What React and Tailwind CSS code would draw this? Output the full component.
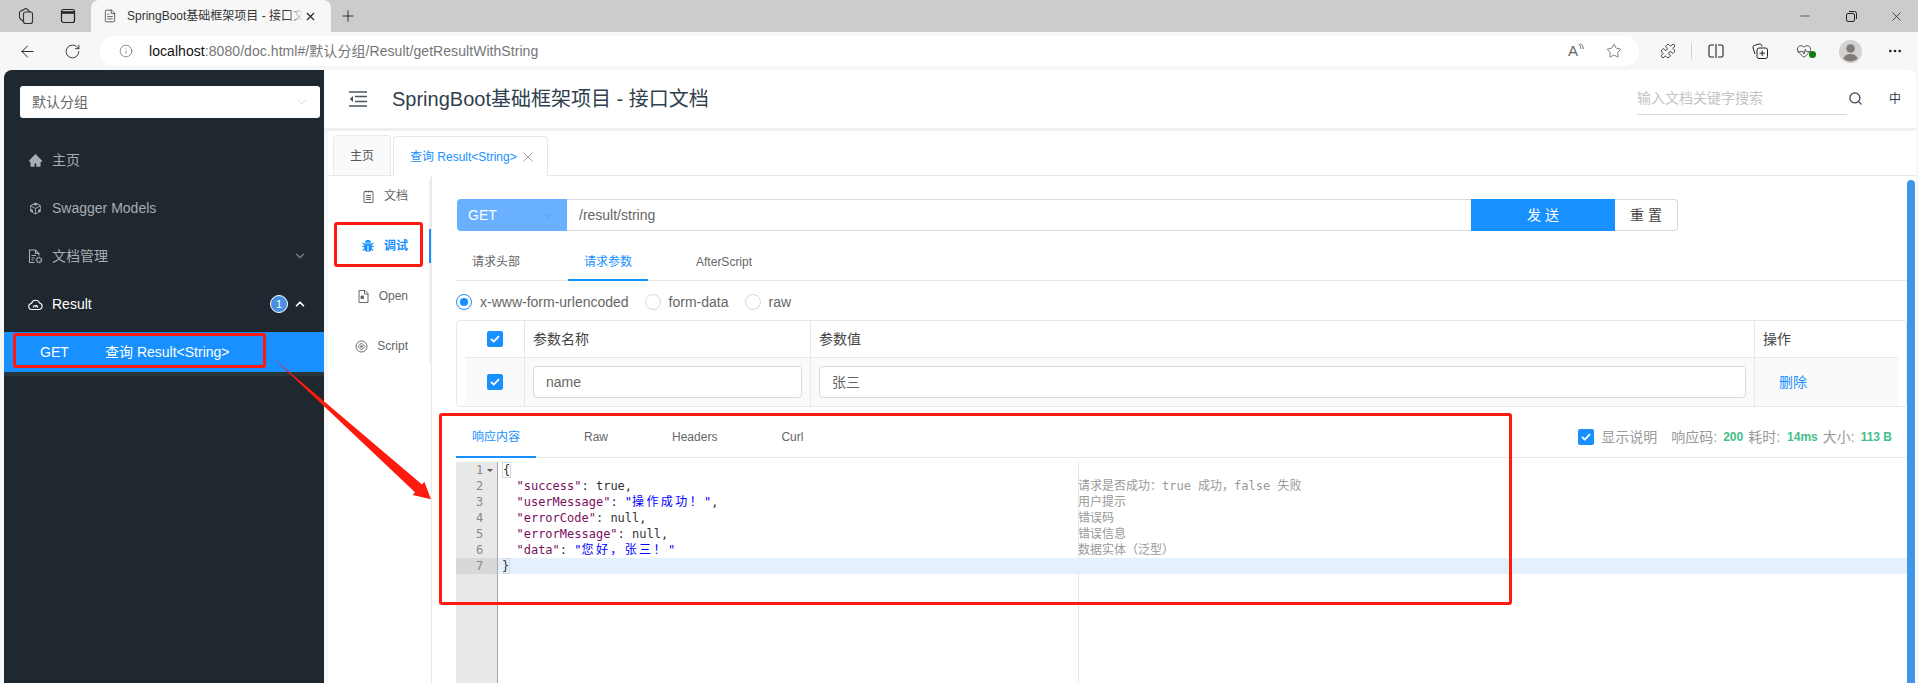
import React from 'react'
import { ArrowLeft, RotateCw, Info, Star, Puzzle, Plus, X, Minus, Search, MoreHorizontal, ChevronDown, ChevronUp, HeartPulse, FileText } from 'lucide-react'
import { AiFillHome, AiOutlineCodeSandbox, AiFillBug } from 'react-icons/ai'

const fontSans = 'font-["Liberation_Sans","Noto_Sans_CJK_SC",sans-serif]'

// Browser chrome -----------------------------------------------------------
function WorkspacesIcon() {
  return (
    <svg width="18" height="18" viewBox="0 0 18 18" fill="none" stroke="#333" strokeWidth="1.1">
      <rect x="6.5" y="5" width="9" height="11.5" rx="2" />
      <path d="M6.5 14.5 L3 11.5 a1.5 1.5 0 0 1 -0.5-1.2 V5.5 a2 2 0 0 1 1.2-1.6 L6 3" />
      <path d="M5.5 3.5 L8 1.8 a1.5 1.5 0 0 1 1.6 0 L13 5" />
    </svg>
  )
}

function VerticalTabsIcon() {
  return (
    <svg width="16" height="16" viewBox="0 0 16 16" fill="none" stroke="#222" strokeWidth="1.2">
      <rect x="1.5" y="1.5" width="13" height="13" rx="2" />
      <path d="M1.5 4.5 H14.5" strokeWidth="2.6" />
    </svg>
  )
}

function BrowserTabs() {
  return (
    <div className="flex h-8 shrink-0 bg-[#cccccc]">
      <div className="flex w-[52px] items-center justify-center"><WorkspacesIcon /></div>
      <div className="flex w-8 items-center justify-center"><VerticalTabsIcon /></div>
      <div className="ml-[7px] flex h-8 w-[240px] items-center rounded-t-lg bg-[#f7f7f7] pl-[12px]">
        <FileText size={14} strokeWidth={1.2} className="shrink-0 text-[#222]" />
        <div className="relative ml-[10px] w-[176px] overflow-hidden whitespace-nowrap text-[12px] text-[#333]">
          SpringBoot基础框架项目 - 接口文档
          <div className="absolute inset-y-0 right-0 w-4 bg-gradient-to-r from-transparent to-[#f7f7f7]" />
        </div>
        <X size={13} className="ml-[1px] shrink-0 text-[#222]" />
      </div>
      <div className="flex w-[34px] items-center justify-center"><Plus size={18} strokeWidth={1.2} className="text-[#222]" /></div>
      <div className="flex-1" />
      <div className="flex w-[46px] items-center justify-center"><Minus size={14} strokeWidth={1.2} className="text-[#222]" /></div>
      <div className="flex w-[46px] items-center justify-center">
        <svg width="11" height="11" viewBox="0 0 11 11" fill="none" stroke="#222" strokeWidth="1">
          <rect x="0.5" y="2.5" width="8" height="8" rx="1.5" />
          <path d="M3 0.5 H8.5 a2 2 0 0 1 2 2 V8" />
        </svg>
      </div>
      <div className="flex w-[44px] items-center justify-center"><X size={15} strokeWidth={1.2} className="text-[#222]" /></div>
    </div>
  )
}

function BrowserToolbar() {
  return (
    <div className="flex h-[38px] shrink-0 items-center bg-[#f7f7f7]">
      <div className="flex w-[54px] justify-center"><ArrowLeft size={19} strokeWidth={1.2} className="text-[#222]" /></div>
      <div className="flex w-9 justify-center"><RotateCw size={17} strokeWidth={1.2} className="text-[#222]" /></div>
      <div className="ml-[10px] flex h-[30px] w-[1539px] items-center justify-between rounded-full bg-white pl-[19px] pr-[17px]">
        <div className="flex items-center gap-[16px]">
          <Info size={14} strokeWidth={1.1} className="text-[#555]" />
          <div className="text-[14px] tracking-[0.06px] text-[#767676]"><span className="text-[#111]">localhost</span>:8080/doc.html#/默认分组/Result/getResultWithString</div>
        </div>
        <div className="flex items-center gap-[22px]">
          <div className="flex items-start text-[#666]">
            <span className="text-[15px] leading-[16px]">A</span>
            <svg width="6" height="8" viewBox="0 0 6 8" fill="none" stroke="#666" strokeWidth="0.9"><path d="M0.5 1 Q3 2.5 3 6" /><path d="M2 0.5 Q5.5 2 5.5 6" /></svg>
          </div>
          <Star size={16} strokeWidth={1} className="text-[#444]" />
        </div>
      </div>
      <div className="ml-[5px] flex w-[47px] justify-center"><Puzzle size={16} strokeWidth={1.2} className="text-[#222]" /></div>
      <div className="h-4 w-px bg-[#d0d0d0]" />
      <div className="flex w-[47px] justify-center">
        <svg width="16" height="14" viewBox="0 0 16 14" fill="none" stroke="#222" strokeWidth="1.1">
          <path d="M6 1 H2.5 a1.5 1.5 0 0 0-1.5 1.5 v9 a1.5 1.5 0 0 0 1.5 1.5 H6" />
          <path d="M10 1 H13.5 a1.5 1.5 0 0 1 1.5 1.5 v9 a1.5 1.5 0 0 1-1.5 1.5 H10" />
          <path d="M8 0 V14" />
        </svg>
      </div>
      <div className="flex w-[42px] justify-center">
        <svg width="16" height="16" viewBox="0 0 16 16" fill="none" stroke="#222" strokeWidth="1">
          <rect x="5" y="5" width="10.5" height="10.5" rx="2" />
          <path d="M10.2 7.5 V13 M7.5 10.2 H13" />
          <path d="M3 11 L1 5 a2 2 0 0 1 1.2-2.5 L7 1 a2 2 0 0 1 2.5 1.2 L10 3.5" />
        </svg>
      </div>
      <div className="relative flex w-[46px] justify-center">
        <HeartPulse size={16} strokeWidth={1.1} className="text-[#222]" />
        <div className="absolute left-[28px] top-[8px] h-[7px] w-[7px] rounded-full bg-[#107c10]" />
      </div>
      <div className="flex w-[46px] justify-center">
        <svg width="23" height="23" viewBox="0 0 23 23">
          <circle cx="11.5" cy="11.5" r="11.5" fill="#d4d2d0" />
          <circle cx="11.5" cy="8.5" r="4.3" fill="#7f7c79" />
          <path d="M4.5 19 a7 5 0 0 1 14 0 a11.5 11.5 0 0 1 -14 0" fill="#7f7c79" />
        </svg>
      </div>
      <div className="flex w-[44px] justify-center"><MoreHorizontal size={16} className="text-[#222]" /></div>
    </div>
  )
}

// Small ant-style icons that the packages don't have
function FileGearIcon() {
  return (
    <svg width="15" height="15" viewBox="0 0 15 15" fill="none" stroke="currentColor" strokeWidth="1.1">
      <path d="M6.5 13.5 H1.5 V1 H7.5 L11 4.5 V6.5" />
      <path d="M7.5 1 V4.5 H11" />
      <path d="M3.5 6.5 H8 M3.5 9 H6.5 M3.5 11 H5.5" />
      <circle cx="11" cy="11" r="2.5" strokeWidth="1.7" strokeDasharray="1.6 0.6" />
    </svg>
  )
}

function CloudGaugeIcon() {
  return (
    <svg width="15" height="15" viewBox="0 0 15 15" fill="none" stroke="currentColor" strokeWidth="1.1">
      <path d="M4 12.5 a3 3 0 0 1 -0.5-6 a4.2 4.2 0 0 1 8-0.5 a3.3 3.3 0 0 1 -0.2 6.5 Z" />
      <path d="M5 10.5 a2.6 2.6 0 0 1 5 0 M7.5 10.5 L8.8 8.3" />
    </svg>
  )
}

function NotepadIcon() {
  return (
    <svg width="13" height="13" viewBox="0 0 13 13" fill="none" stroke="currentColor" strokeWidth="1">
      <rect x="2" y="1.5" width="9" height="11" rx="0.5" />
      <path d="M4 0.5 V2.5 M6.5 0.5 V2.5 M9 0.5 V2.5 M4 5.5 H9 M4 7.5 H9 M4 9.5 H9" />
    </svg>
  )
}

function FileLinesIcon() {
  return (
    <svg width="13" height="13" viewBox="0 0 13 13" fill="none" stroke="currentColor" strokeWidth="1">
      <path d="M2 0.5 H8 L11 3.5 V12.5 H2 Z" />
      <path d="M7.5 0.5 V4 H11" />
      <path d="M4 6 H6.5 V8.5 H4 Z" fill="currentColor" />
    </svg>
  )
}

function ScriptIcon() {
  return (
    <svg width="13" height="13" viewBox="0 0 13 13" fill="none" stroke="currentColor" strokeWidth="1">
      <circle cx="6.5" cy="6.5" r="5.5" />
      <path d="M6.5 3 L10 6.5 L6.5 10 L3 6.5 Z" />
      <circle cx="6.5" cy="6.5" r="1.2" fill="currentColor" stroke="none" />
    </svg>
  )
}

// Left navigation ----------------------------------------------------------
function NavItem({ icon, label, active, right }) {
  return (
    <div className={`flex h-12 items-center pl-6 pr-[17px] text-[14px] ${active ? 'text-white' : 'text-[#a6adb4]'}`}>
      <span className={`flex w-6 ${active ? 'text-white' : 'text-[#a6adb4]'}`}>{icon}</span>
      <span className="flex-1">{label}</span>
      {right}
    </div>
  )
}

function Sidebar() {
  return (
    <div className="flex w-[320px] shrink-0 flex-col rounded-tl-lg bg-[#1f282e]">
      <div className="ml-4 mr-1 mt-4 flex h-8 items-center justify-between rounded-[3px] bg-white pl-3 pr-[11px] text-[14px] text-[#666]">
        默认分组
        <ChevronDown size={14} strokeWidth={1} className="text-[#bbb]" />
      </div>
      <div className="mt-[18px]">
        <NavItem icon={<AiFillHome size={15} />} label="主页" />
        <NavItem icon={<AiOutlineCodeSandbox size={15} />} label="Swagger Models" />
        <NavItem
          icon={<FileGearIcon />}
          label="文档管理"
          right={<ChevronDown size={14} strokeWidth={3} className="text-[#6a7378]" />}
        />
        <NavItem
          active
          icon={<CloudGaugeIcon />}
          label="Result"
          right={
            <div className="flex items-center gap-[5px]">
              <span className="flex h-[18px] w-[18px] items-center justify-center rounded-full border border-white bg-[#4a90e2] text-[11px] text-white">1</span>
              <ChevronUp size={14} strokeWidth={3} className="text-white" />
            </div>
          }
        />
      </div>
      <div className="mt-1 flex h-10 items-center bg-[#1890ff] text-[14px] text-white">
        <span className="w-[101px] pl-9">GET</span>
        <span>查询 Result&lt;String&gt;</span>
      </div>
      <div className="h-1 bg-[#29353b]" />
    </div>
  )
}

// Document tabs and left method menu --------------------------------------
function TopHeader() {
  return (
    <div className="flex h-[61px] shrink-0 items-center border-b-[3px] border-[#eef1f4] pb-[1px] pl-[25px] text-[#303f4d]">
      <svg width="18" height="16" viewBox="0 0 18 16" fill="none" stroke="#49555f" strokeWidth="1.6">
        <path d="M0 1 H18 M6 5.5 H18 M6 10.5 H18 M0 15 H18" />
        <path d="M4 5 L0.8 8 L4 11 Z" fill="#49555f" stroke="none" />
      </svg>
      <div className="ml-[25px] text-[20px]">SpringBoot基础框架项目 - 接口文档</div>
      <div className="flex-1" />
      <div className="flex h-[32px] w-[210px] items-center border-b border-[#d9d9d9] text-[14px] text-[#c4c4c4]">输入文档关键字搜索</div>
      <Search size={15} className="ml-[1px] text-[#303f4d]" />
      <div className="ml-[26px] mr-[15px] text-[12px] text-[#303f4d]">中</div>
    </div>
  )
}

function DocTabs() {
  return (
    <div className="mt-[5px] flex h-10 shrink-0 items-end border-b border-[#e8e8e8] pl-[5px]">
      <div className="flex h-10 w-[58px] items-center justify-center rounded-t border border-b-0 border-[#e8e8e8] bg-[#fafafa] text-[12px] text-[#555]">主页</div>
      <div className="-mb-px ml-[2px] flex h-10 w-[155px] items-center gap-[3px] rounded-t border border-b-0 border-[#e8e8e8] bg-white pl-[16px] text-[12px] text-[#1890ff]">
        查询 Result&lt;String&gt;
        <X size={16} strokeWidth={1} className="text-[#777]" />
      </div>
    </div>
  )
}

function MethodMenu() {
  const items = [
    { label: '文档', icon: <NotepadIcon /> },
    { label: '调试', icon: <AiFillBug size={14} />, active: true },
    { label: 'Open', icon: <FileLinesIcon /> },
    { label: 'Script', icon: <ScriptIcon /> },
  ]
  return (
    <div className="w-[104px] shrink-0 border-r border-[#e8e8e8] pt-[3px]">
      <div className="flex flex-col gap-4 border-r-2 border-[#f0f0f0]">
        {items.map((item) => (
          <div
            key={item.label}
            className={`-mr-0.5 flex h-[34px] items-center justify-end gap-[9px] border-r-2 pr-[21px] text-[12px] ${
              item.active ? 'border-[#1890ff] font-bold text-[#1890ff]' : 'border-transparent text-[#666]'
            }`}
          >
            {item.icon}
            {item.label}
          </div>
        ))}
      </div>
    </div>
  )
}

// Request form -------------------------------------------------------------
function Check() {
  return (
    <div className="flex h-4 w-4 shrink-0 items-center justify-center rounded-[2px] bg-[#1890ff]">
      <svg width="10" height="8" viewBox="0 0 10 8" fill="none" stroke="#fff" strokeWidth="1.8"><path d="M1 4 L3.8 6.6 L9 1.2" /></svg>
    </div>
  )
}

function Radio({ label, on }) {
  return (
    <div className="flex items-center gap-2 text-[14px] text-[#666]">
      <div className={`flex h-4 w-4 items-center justify-center rounded-full border ${on ? 'border-[#1890ff]' : 'border-[#d9d9d9]'}`}>
        {on && <div className="h-2 w-2 rounded-full bg-[#1890ff]" />}
      </div>
      {label}
    </div>
  )
}

function TabRow({ tabs, active, height }) {
  return (
    <div className={`flex items-center ${height}`}>
      {tabs.map((t) => (
        <div key={t} className={`mr-8 px-4 text-[12px] ${t === active ? 'text-[#1890ff]' : 'text-[#666]'}`}>{t}</div>
      ))}
    </div>
  )
}

function RequestForm() {
  return (
    <>
      <div className="mt-[23px] flex h-8 pl-[1px]">
        <div className="flex w-[110px] items-center justify-between rounded-l bg-[#69b1ff] pl-[11px] pr-[12px] text-[14px] text-white">
          GET
          <ChevronDown size={13} strokeWidth={1} className="text-[#3d8ee0]" />
        </div>
        <div className="flex w-[904px] items-center border-y border-[#d9d9d9] pl-3 text-[14px] text-[#666]">/result/string</div>
        <div className="w-[144px] bg-[#1890ff] text-center text-[14px] leading-8 text-white">发 送</div>
        <div className="w-[63px] rounded-r border border-l-0 border-[#d9d9d9] text-center text-[14px] leading-[30px] text-[#444]">重 置</div>
      </div>
      <div className="relative h-[50px] border-b border-[#e8e8e8] pt-[19px]">
        <TabRow tabs={['请求头部', '请求参数', 'AfterScript']} active="请求参数" height="h-6" />
        <div className="absolute bottom-[-1px] left-[112px] h-0.5 w-20 bg-[#1890ff]" />
      </div>
      <div className="flex h-[39px] items-center gap-4 pt-[3px]">
        <Radio on label="x-www-form-urlencoded" />
        <Radio label="form-data" />
        <Radio label="raw" />
      </div>
      <div className="grid grid-cols-[59px_286px_944px_144px] grid-rows-[37px_48px] rounded border border-[#e8e8e8] px-2 text-[14px] text-[#444]">
        <div className="flex items-center justify-center border-b border-[#e8e8e8]"><Check /></div>
        <div className="flex items-center border-b border-l border-[#e8e8e8] pl-2">参数名称</div>
        <div className="flex items-center border-b border-l border-[#e8e8e8] pl-2">参数值</div>
        <div className="flex items-center border-b border-l border-[#e8e8e8] pl-2">操作</div>
        <div className="flex items-center justify-center bg-[#fafafa]"><Check /></div>
        <div className="flex items-center border-l border-[#e8e8e8] bg-[#fafafa] px-2">
          <div className="flex h-8 w-full items-center rounded border border-[#d9d9d9] bg-white pl-3 text-[#666]">name</div>
        </div>
        <div className="flex items-center border-l border-[#e8e8e8] bg-[#fafafa] px-2">
          <div className="flex h-8 w-full items-center rounded border border-[#d9d9d9] bg-white pl-3 text-[#666]">张三</div>
        </div>
        <div className="flex items-center border-l border-[#e8e8e8] bg-[#fafafa] pl-6 text-[#1890ff]">删除</div>
      </div>
    </>
  )
}

// Response panel -----------------------------------------------------------
const Key = ({ children }) => <span className="text-[#7a0f5c]">{children}</span>
const Str = ({ children }) => <span className="text-[#0000ff]">{children}</span>
const Cjk = ({ children }) => <span className="tracking-[2.4px]">{children}</span>

const codeLines = [
  { code: <span className="border border-[#d8d8d8]">{'{'}</span> },
  { code: <>{'  '}<Key>"success"</Key>: true,</>, note: '请求是否成功：true 成功，false 失败' },
  { code: <>{'  '}<Key>"userMessage"</Key>: <Str>"<Cjk>操作成功！</Cjk>"</Str>,</>, note: '用户提示' },
  { code: <>{'  '}<Key>"errorCode"</Key>: null,</>, note: '错误码' },
  { code: <>{'  '}<Key>"errorMessage"</Key>: null,</>, note: '错误信息' },
  { code: <>{'  '}<Key>"data"</Key>: <Str>"<Cjk>您好，张三！</Cjk>"</Str></>, note: '数据实体（泛型）' },
  { code: <span className="border border-l-0 border-[#d8d8d8]">{'}'}</span>, active: true },
]

function Editor() {
  return (
    <div className='mt-[4px] flex min-h-0 flex-1 font-["DejaVu_Sans_Mono","Noto_Sans_CJK_SC",monospace] text-[12px] leading-4 text-[#333]'>
      <div className="w-[42px] shrink-0 border-r border-[#a8a8a8] bg-[#e8e8e8] text-[#888]">
        {codeLines.map((line, i) => (
          <div key={i} className={`relative h-4 pl-5 ${line.active ? 'bg-[#d8d8d8]' : ''}`}>
            {i + 1}
            {i === 0 && <div className="absolute left-[31px] top-[7px] h-0 w-0 border-x-[3px] border-t-[3px] border-x-transparent border-t-[#555]" />}
          </div>
        ))}
      </div>
      <div className="relative flex-1">
        <div className="absolute inset-y-0 left-[580px] w-px bg-[#e8e8e8]" />
        {codeLines.map((line, i) => (
          <div key={i} className={`relative flex h-4 whitespace-pre ${line.active ? 'bg-[#e4f0fb]' : ''}`}>
            <div className="w-[580px] pl-1">{line.code}</div>
            <div className="text-[#999]">{line.note}</div>
          </div>
        ))}
      </div>
    </div>
  )
}

function ResponsePanel() {
  return (
    <div className="flex min-h-0 flex-1 flex-col">
      <div className="relative flex h-[51px] shrink-0 items-center justify-between border-b border-[#e8e8e8] pr-[15px] pt-[10px]">
        <TabRow tabs={['响应内容', 'Raw', 'Headers', 'Curl']} active="响应内容" height="h-6" />
        <div className="absolute bottom-[-1px] left-0 h-0.5 w-20 bg-[#1890ff]" />
        <div className="flex items-center text-[14px] text-[#999]">
          <Check />
          <span className="ml-[7px]">显示说明</span>
          <span className="ml-[14px]">响应码:</span>
          <span className="ml-[6px] text-[12px] font-bold text-[#42c088]">200</span>
          <span className="ml-[5px]">耗时:</span>
          <span className="ml-[7px] text-[12px] font-bold text-[#42c088]">14ms</span>
          <span className="ml-[5px]">大小:</span>
          <span className="ml-[6px] text-[12px] font-bold text-[#42c088]">113 B</span>
        </div>
      </div>
      <Editor />
    </div>
  )
}

// Red annotations drawn over the screenshot
function Annotations() {
  return (
    <>
      <div className="absolute left-[13px] top-[333px] h-[35px] w-[253px] rounded-[3px] border-[3px] border-[#ff1a0f]" />
      <div className="absolute left-[334px] top-[222px] h-[45px] w-[89px] rounded-[3px] border-[3px] border-[#ff1a0f]" />
      <div className="absolute left-[439px] top-[413px] h-[192px] w-[1073px] rounded-[3px] border-[3px] border-[#ff1a0f]" />
      <svg className="absolute left-[273px] top-[358px]" width="160" height="143" viewBox="0 0 160 143">
        <polygon points="0.3,0.3 149,126.4 151.3,123.7 158,141.3 139.7,137 142,134.3" fill="#ff1a0f" />
      </svg>
    </>
  )
}

export default function App() {
  return (
    <div className={`relative flex h-[683px] w-[1918px] flex-col overflow-hidden bg-[#f7f7f7] ${fontSans}`}>
      <BrowserTabs />
      <BrowserToolbar />
      <div className="flex min-h-0 flex-1 pl-1 pr-[2px]">
        <Sidebar />
        <div className="flex min-w-0 flex-1 flex-col rounded-tr-lg bg-white">
          <TopHeader />
          <div className="flex min-h-0 flex-1 flex-col border-l-4 border-[#f7f7f7]">
            <DocTabs />
            <div className="flex min-h-0 flex-1">
              <MethodMenu />
              <div className="flex min-w-0 flex-1 flex-col pl-6">
                <RequestForm />
                <ResponsePanel />
              </div>
              <div className="mt-[4px] w-2 shrink-0 rounded-t bg-[#4096e6]" />
              <div className="w-[1px] shrink-0" />
            </div>
          </div>
        </div>
      </div>
      <Annotations />
    </div>
  )
}
